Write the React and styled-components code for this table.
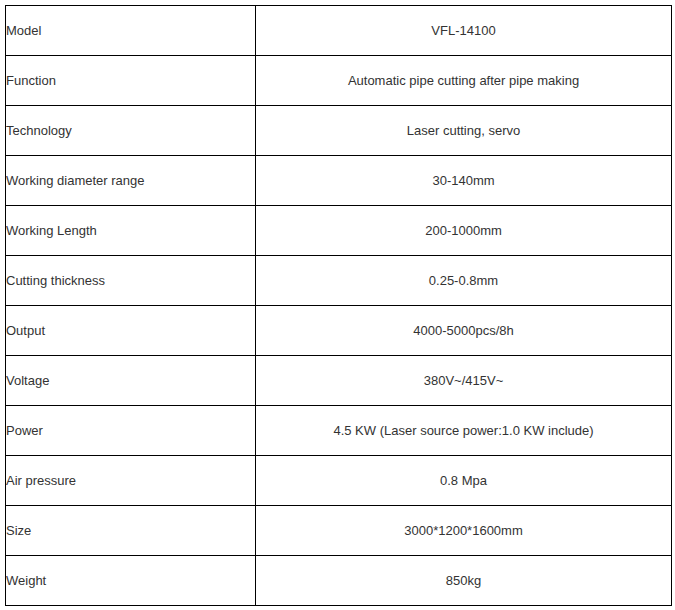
import React from "react";
import styled, { createGlobalStyle } from "styled-components";

const GlobalStyle = createGlobalStyle`
  body {
    margin: 0;
    padding: 5px;
    background: #fff;
    font-family: "Liberation Sans", Arial, sans-serif;
  }
`;

const specs = [
  ["Model", "VFL-14100"],
  ["Function", "Automatic pipe cutting after pipe making"],
  ["Technology", "Laser cutting, servo"],
  ["Working diameter range", "30-140mm"],
  ["Working Length", "200-1000mm"],
  ["Cutting thickness", "0.25-0.8mm"],
  ["Output", "4000-5000pcs/8h"],
  ["Voltage", "380V~/415V~"],
  ["Power", "4.5 KW (Laser source power:1.0 KW include)"],
  ["Air pressure", "0.8 Mpa"],
  ["Size", "3000*1200*1600mm"],
  ["Weight", "850kg"],
];

const Table = styled.table`
  width: 667px;
  border-collapse: collapse;
  table-layout: fixed;
  font-size: 13px;
  color: #333;
`;

const Cell = styled.td`
  height: 49px;
  padding: 0;
  border: 1px solid #000;
  text-align: ${(p) => (p.$center ? "center" : "left")};
  vertical-align: middle;
`;

const LabelCol = styled.col`
  width: 250px;
`;

export default function App() {
  return (
    <>
      <GlobalStyle />
      <Table>
        <colgroup>
          <LabelCol />
          <col />
        </colgroup>
        <tbody>
          {specs.map(([label, value]) => (
            <tr key={label}>
              <Cell>{label}</Cell>
              <Cell $center>{value}</Cell>
            </tr>
          ))}
        </tbody>
      </Table>
    </>
  );
}
